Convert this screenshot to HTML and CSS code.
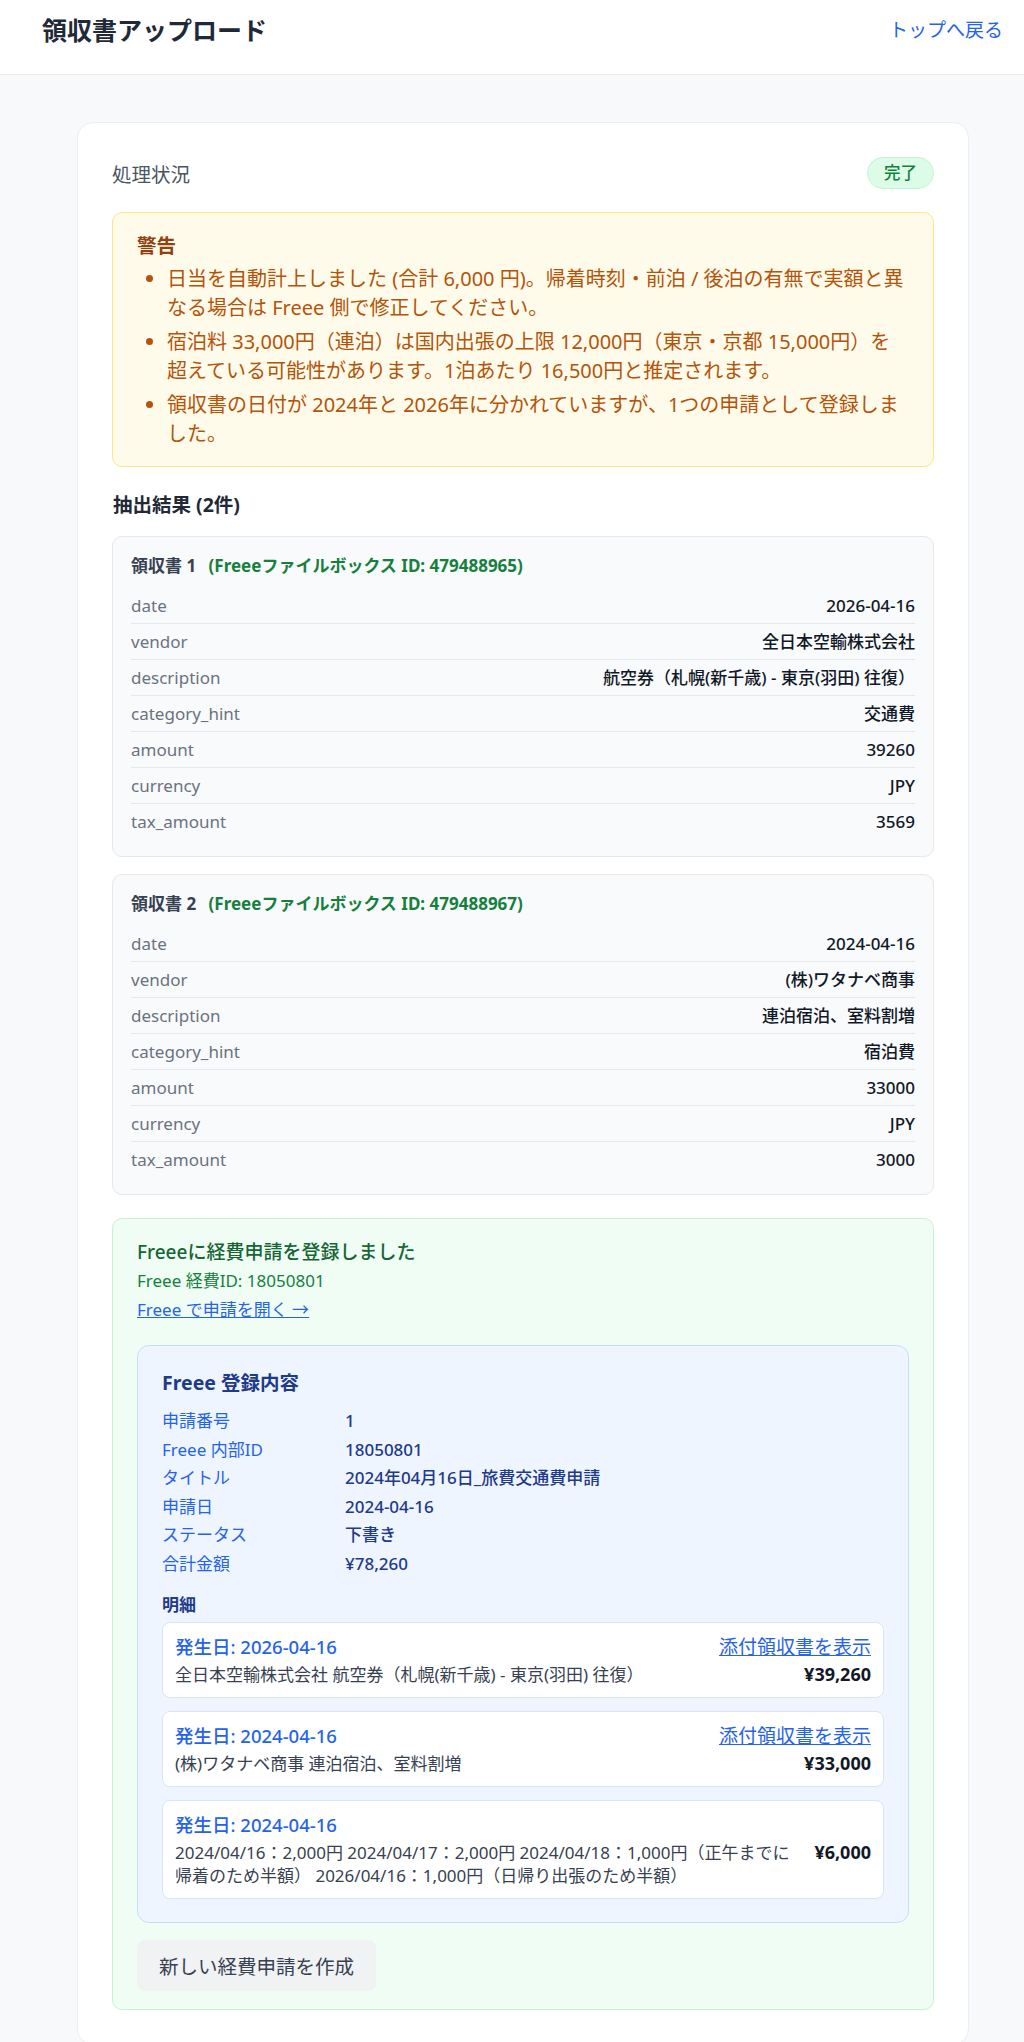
FILE: index.html
```html
<!DOCTYPE html>
<html lang="ja">
<head>
  <meta charset="UTF-8">
  <meta name="viewport" content="width=device-width, initial-scale=1.0">
  <title>領収書アップロード</title>
  <link rel="stylesheet" href="styles.css">
</head>
<body>

<header class="site-header">
  <h1>領収書アップロード</h1>
  <a href="#" class="back-link">トップへ戻る</a>
</header>

<main class="page">
  <section class="card">

    <div class="status-row">
      <span class="status-label">処理状況</span>
      <span class="badge">完了</span>
    </div>

    <!-- Warnings -->
    <div class="warning">
      <p class="warning-title">警告</p>
      <ul>
        <li>日当を自動計上しました (合計 6,000 円)。帰着時刻・前泊 / 後泊の有無で実額と異なる場合は Freee 側で修正してください。</li>
        <li>宿泊料 33,000円（連泊）は国内出張の上限 12,000円（東京・京都 15,000円）を超えている可能性があります。1泊あたり 16,500円と推定されます。</li>
        <li>領収書の日付が 2024年と 2026年に分かれていますが、1つの申請として登録しました。</li>
      </ul>
    </div>

    <h2 class="section-title">抽出結果 (2件)</h2>

    <div class="receipt">
      <p class="receipt-title">領収書 1 <span class="file-id">(Freeeファイルボックス ID: 479488965)</span></p>
      <div class="field"><span>date</span><span class="val">2026-04-16</span></div>
      <div class="field"><span>vendor</span><span class="val">全日本空輸株式会社</span></div>
      <div class="field"><span>description</span><span class="val">航空券（札幌(新千歳) - 東京(羽田) 往復）</span></div>
      <div class="field"><span>category_hint</span><span class="val">交通費</span></div>
      <div class="field"><span>amount</span><span class="val">39260</span></div>
      <div class="field"><span>currency</span><span class="val">JPY</span></div>
      <div class="field"><span>tax_amount</span><span class="val">3569</span></div>
    </div>

    <div class="receipt">
      <p class="receipt-title">領収書 2 <span class="file-id">(Freeeファイルボックス ID: 479488967)</span></p>
      <div class="field"><span>date</span><span class="val">2024-04-16</span></div>
      <div class="field"><span>vendor</span><span class="val">(株)ワタナベ商事</span></div>
      <div class="field"><span>description</span><span class="val">連泊宿泊、室料割増</span></div>
      <div class="field"><span>category_hint</span><span class="val">宿泊費</span></div>
      <div class="field"><span>amount</span><span class="val">33000</span></div>
      <div class="field"><span>currency</span><span class="val">JPY</span></div>
      <div class="field"><span>tax_amount</span><span class="val">3000</span></div>
    </div>

    <!-- Registration result -->
    <div class="success">
      <p class="success-title">Freeeに経費申請を登録しました</p>
      <p class="success-id">Freee 経費ID: 18050801</p>
      <a href="#" class="success-link">Freee で申請を開く →</a>

      <div class="registered">
        <h3>Freee 登録内容</h3>
        <dl>
          <dt>申請番号</dt><dd>1</dd>
          <dt>Freee 内部ID</dt><dd>18050801</dd>
          <dt>タイトル</dt><dd>2024年04月16日_旅費交通費申請</dd>
          <dt>申請日</dt><dd>2024-04-16</dd>
          <dt>ステータス</dt><dd>下書き</dd>
          <dt>合計金額</dt><dd>¥78,260</dd>
        </dl>

        <p class="lines-title">明細</p>

        <div class="line-item">
          <div class="line-top">
            <span class="line-date">発生日: 2026-04-16</span>
            <a href="#" class="line-link">添付領収書を表示</a>
          </div>
          <div class="line-body">
            <span class="line-desc">全日本空輸株式会社 航空券（札幌(新千歳) - 東京(羽田) 往復）</span>
            <span class="line-amount">¥39,260</span>
          </div>
        </div>

        <div class="line-item">
          <div class="line-top">
            <span class="line-date">発生日: 2024-04-16</span>
            <a href="#" class="line-link">添付領収書を表示</a>
          </div>
          <div class="line-body">
            <span class="line-desc">(株)ワタナベ商事 連泊宿泊、室料割増</span>
            <span class="line-amount">¥33,000</span>
          </div>
        </div>

        <div class="line-item">
          <div class="line-top">
            <span class="line-date">発生日: 2024-04-16</span>
          </div>
          <div class="line-body">
            <span class="line-desc">2024/04/16：2,000円 2024/04/17：2,000円 2024/04/18：1,000円（正午までに帰着のため半額） 2026/04/16：1,000円（日帰り出張のため半額）</span>
            <span class="line-amount">¥6,000</span>
          </div>
        </div>
      </div>

      <button type="button" class="btn-new">新しい経費申請を作成</button>
    </div>

  </section>
</main>

</body>
</html>
```

FILE: styles.css
```css
/* General */
body {
  margin: 0;
  background-color: #f8f9fb;
  font-family: "Noto Sans", "Noto Sans CJK JP", sans-serif;
  color: #1f2937;
}

p {
  margin: 0;
}

a {
  color: #2563eb;
}

/* Header */
.site-header {
  height: 75px;
  box-sizing: border-box;
  padding: 13px 21px 0 42px;
  background-color: #fff;
  border-bottom: 1px solid #e8eaee;
  display: flex;
  justify-content: space-between;
  align-items: flex-start;
}

.site-header h1 {
  margin: 0;
  font-size: 25px;
  line-height: 34px;
  font-weight: 700;
  color: #1f2937;
}

.back-link {
  font-size: 19px;
  line-height: 34px;
  text-decoration: none;
}

/* Page + main card */
.page {
  padding: 47px 55px 40px 77px;
}

.card {
  background-color: #fff;
  border: 1px solid #eceef2;
  border-radius: 16px;
  padding: 34px 34px 34px;
}

.status-row {
  display: flex;
  justify-content: space-between;
  align-items: center;
}

.status-label {
  font-size: 19.5px;
  color: #4b5563;
}

.badge {
  height: 32px;
  line-height: 30px;
  box-sizing: border-box;
  padding: 0 16px;
  border-radius: 999px;
  background-color: #dcfce7;
  border: 1px solid #c6f3d6;
  color: #15803d;
  font-size: 16.5px;
  font-weight: 500;
}

/* Warning box */
.warning {
  margin-top: 23px;
  padding: 18px 24px 18px;
  background-color: #fefbea;
  border: 1px solid #fde68a;
  border-radius: 10px;
}

.warning-title {
  font-size: 19.5px;
  line-height: 29px;
  font-weight: 700;
  color: #92400e;
}

.warning ul {
  margin: 4px 0 0;
  padding-left: 30px;
  color: #b45309;
  font-size: 20px;
  line-height: 29px;
}

.warning li + li {
  margin-top: 5px;
}

/* Extracted receipts */
.section-title {
  margin: 23px 0 17px 1px;
  font-size: 19.5px;
  line-height: 29px;
  font-weight: 700;
  color: #1f2937;
}

.receipt {
  background-color: #f9fafb;
  border: 1px solid #e5e7eb;
  border-radius: 10px;
  padding: 17px 18px 17px;
  font-size: 17px;
}

.receipt + .receipt {
  margin-top: 17px;
}

.receipt-title {
  line-height: 24px;
  font-weight: 700;
  color: #374151;
  margin-bottom: 10px;
}

.file-id {
  color: #15803d;
  margin-left: 8px;
}

.field {
  display: flex;
  justify-content: space-between;
  padding: 6px 0 5px;
  line-height: 24px;
  color: #6b7280;
  border-bottom: 1px solid #e5e7eb;
}

.field:last-child {
  border-bottom: none;
}

.field .val {
  color: #111827;
  font-weight: 500;
}

/* Registration result */
.success {
  margin-top: 23px;
  padding: 21px 24px 18px;
  background-color: #effdf4;
  border: 1px solid #c4f3d5;
  border-radius: 10px;
}

.success-title {
  font-size: 19px;
  line-height: 24px;
  font-weight: 500;
  color: #166534;
}

.success-id {
  margin-top: 5px;
  font-size: 17px;
  line-height: 24px;
  color: #15803d;
}

.success-link {
  display: inline-block;
  margin-top: 5px;
  font-size: 17px;
  line-height: 24px;
}

.registered {
  margin-top: 23px;
  padding: 24px 24px 23px;
  background-color: #eef5ff;
  border: 1px solid #c7dcfc;
  border-radius: 12px;
}

.registered h3 {
  margin: 0 0 11px;
  font-size: 19.5px;
  line-height: 26px;
  font-weight: 700;
  color: #1e3a8a;
}

.registered dl {
  margin: 0;
  display: grid;
  grid-template-columns: 183px 1fr;
  font-size: 17px;
  line-height: 28.6px;
}

.registered dt {
  color: #2563eb;
}

.registered dd {
  margin: 0;
  color: #1e3a8a;
  font-weight: 500;
}

.lines-title {
  margin-top: 14px;
  margin-bottom: 5px;
  font-size: 17px;
  line-height: 24px;
  font-weight: 700;
  color: #1e3a8a;
}

.line-item {
  background-color: #fff;
  border: 1px solid #d6e5fc;
  border-radius: 8px;
  padding: 12px 12px 11px;
}

.line-item + .line-item {
  margin-top: 13px;
}

.line-top {
  display: flex;
  justify-content: space-between;
  align-items: baseline;
  line-height: 24px;
}

.line-date {
  font-size: 18.5px;
  font-weight: 500;
  color: #2563eb;
}

.line-link {
  font-size: 19px;
}

.line-body {
  display: flex;
  justify-content: space-between;
  align-items: flex-start;
  margin-top: 4px;
  font-size: 17px;
  line-height: 23px;
}

.line-desc {
  color: #374151;
}

.line-amount {
  margin-left: 16px;
  font-weight: 700;
  color: #111827;
  white-space: nowrap;
  font-size: 18px;
}

.btn-new {
  margin-top: 17px;
  height: 51px;
  padding: 0 22px;
  border: none;
  border-radius: 8px;
  background-color: #f1f2f4;
  color: #374151;
  font-family: inherit;
  font-size: 19.5px;
  cursor: pointer;
}
```
